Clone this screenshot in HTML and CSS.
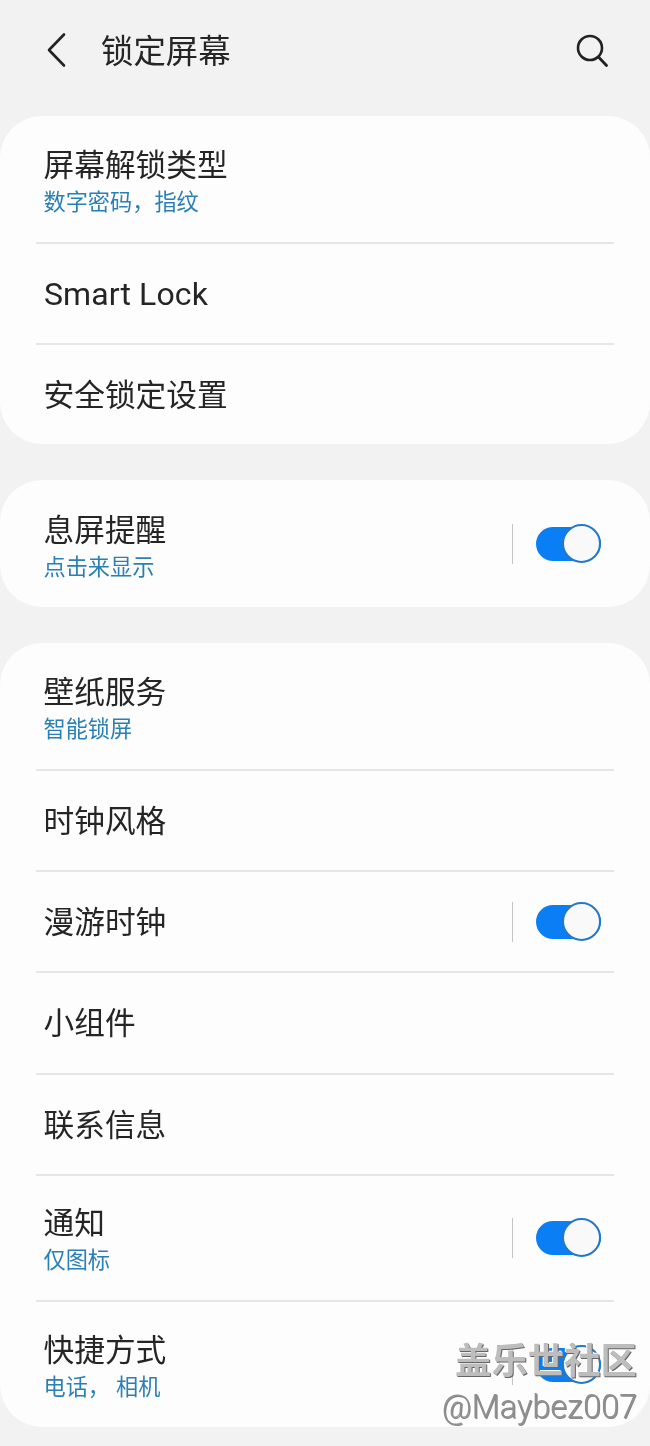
FILE: index.html
```html
<!DOCTYPE html>
<html lang="zh-CN">
<head>
<meta charset="utf-8">
<title>锁定屏幕</title>
<link rel="stylesheet" href="styles.css">
</head>
<body>
<div class="page">
  <header class="topbar">
    <svg class="icon-back" width="24" height="36" viewBox="0 0 24 36"><path d="M19 2.5 L4 18 L19 33.5" fill="none" stroke="#222" stroke-width="2.6" stroke-linecap="round" stroke-linejoin="round"/></svg>
    <h1 class="title">锁定屏幕</h1>
    <svg class="icon-search" width="34" height="34" viewBox="0 0 34 34"><circle cx="15" cy="15" r="12" fill="none" stroke="#222" stroke-width="2.6"/><path d="M23.5 24 L31.5 32.5" fill="none" stroke="#222" stroke-width="2.8" stroke-linecap="round"/></svg>
  </header>

  <section class="card">
    <div class="row row-tall"><div class="text"><div class="name">屏幕解锁类型</div><div class="sub">数字密码，指纹</div></div></div>
    <div class="row"><div class="text"><div class="name latin">Smart Lock</div></div></div>
    <div class="row row-last"><div class="text single"><div class="name">安全锁定设置</div></div></div>
  </section>

  <section class="card">
    <div class="row row-solo"><div class="text"><div class="name">息屏提醒</div><div class="sub">点击来显示</div></div><div class="sep"></div><div class="switch"><span class="knob"></span></div></div>
  </section>

  <section class="card">
    <div class="row row-tall"><div class="text"><div class="name">壁纸服务</div><div class="sub">智能锁屏</div></div></div>
    <div class="row"><div class="text single"><div class="name">时钟风格</div></div></div>
    <div class="row"><div class="text single"><div class="name">漫游时钟</div></div><div class="sep"></div><div class="switch"><span class="knob"></span></div></div>
    <div class="row row-wide"><div class="text single"><div class="name">小组件</div></div></div>
    <div class="row"><div class="text single"><div class="name">联系信息</div></div></div>
    <div class="row row-mid"><div class="text lifted"><div class="name">通知</div><div class="sub">仅图标</div></div><div class="sep"></div><div class="switch"><span class="knob"></span></div></div>
    <div class="row row-end"><div class="text lifted"><div class="name">快捷方式</div><div class="sub sub-spaced">电话， 相机</div></div><div class="sep"></div><div class="switch"><span class="knob"></span></div></div>
  </section>

  <div class="watermark">
    <div class="wm-cn">盖乐世社区</div>
    <div class="wm-en">@Maybez007</div>
  </div>
</div>
</body>
</html>
```

FILE: styles.css
```css
* { box-sizing: border-box; }
html, body { margin: 0; padding: 0; }
body {
  background: #f2f2f2;
  font-family: "Noto Sans CJK SC", "Noto Sans", sans-serif;
  color: #252525;
}
.page { position: relative; width: 650px; height: 1446px; overflow: hidden; filter: blur(0.35px); }
.topbar { display: flex; align-items: center; height: 116px; padding: 0 41px 16px 45px; }
.icon-back { flex: none; }
.title { flex: 1; margin: 0 0 2px 32px; font-size: 32.4px; line-height: 44px; font-weight: 400; }
.icon-search { flex: none; }
.card {
  background: #fdfdfd;
  border-radius: 42px;
  margin-bottom: 36px;
  padding: 0 36px;
}
.row {
  display: flex;
  align-items: center;
  height: 101px;
  padding: 0 13px 0 7.5px;
  border-bottom: 2px solid #e6e6e6;
}
.row-tall { height: 128px; }
.row-wide { height: 102px; }
.row-mid { height: 126px; }
.row-end { height: 125px; border-bottom: 0; }
.row-last { height: 99px; border-bottom: 0; }
.row-solo { height: 127px; border-bottom: 0; }
.text { flex: 1; }
.single { margin-bottom: 4px; }
.lifted { margin-bottom: 2px; }
.name { font-size: 30.7px; line-height: 40px; font-weight: 400; }
.latin { font-family: "Roboto", sans-serif; font-size: 32px; letter-spacing: 0.1px; margin-left: 0.5px; }
.sub { font-size: 22.2px; line-height: 30px; color: #2a7fb5; margin-top: 2px; }
.sub-spaced { word-spacing: 1px; }
.sep { width: 1px; height: 40px; background: #c4c4c4; margin-right: 23px; }
.switch {
  position: relative;
  width: 65px;
  height: 34px;
  border-radius: 17px;
  background: #0a7ff5;
}
.knob {
  position: absolute;
  right: 0;
  top: -3px;
  width: 39px;
  height: 39px;
  border-radius: 50%;
  background: #f9f9f9;
  border: 2px solid #2379c9;
}
.watermark {
  position: absolute;
  right: 13px;
  top: 1331px;
  text-align: right;
}
.wm-cn {
  font-size: 36.4px;
  line-height: 54px;
  font-weight: 700;
  color: #bdbdbd;
  text-shadow: 1px 1px 0 #666, -1px -1px 0 #fff;
}
.wm-en {
  font-family: "Roboto", sans-serif;
  font-weight: 300;
  font-size: 32.5px;
  line-height: 40px;
  margin-top: 2px;
  color: #8f8f8f;
  text-shadow: 1px 1px 0 #888, -1px -1px 0 #fff;
}
```
